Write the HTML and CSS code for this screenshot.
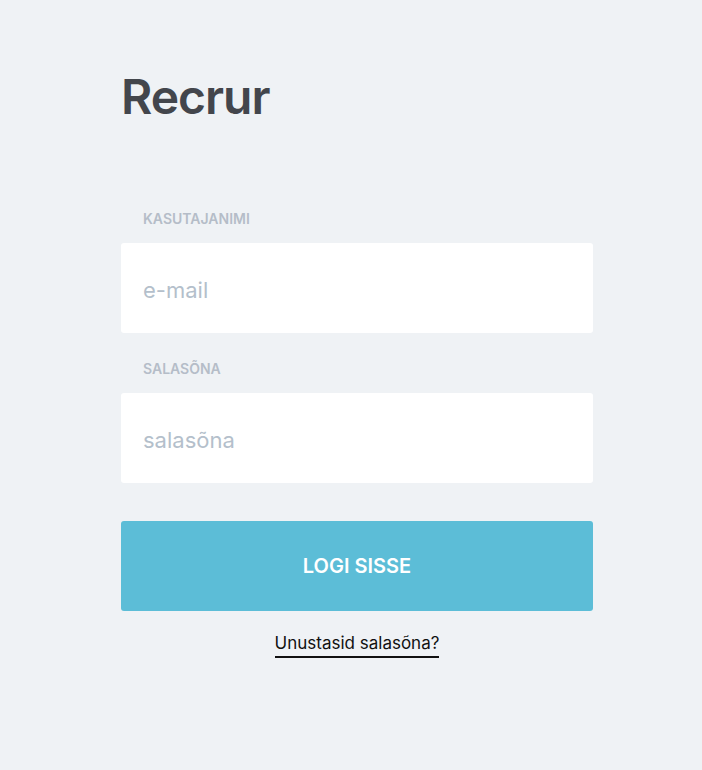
FILE: index.html
```html
<!DOCTYPE html>
<html lang="et">
<head>
    <meta charset="UTF-8">
    <meta name="viewport" content="width=device-width, initial-scale=1.0">
    <title>Recrur</title>
    <link rel="stylesheet" href="styles.css">
</head>
<body>
    <div class="login">
        <h1 class="logo">Recrur</h1>

        <form class="login-form">
            <label class="field-label" for="email">KASUTAJANIMI</label>
            <input class="field" id="email" type="text" placeholder="e-mail">

            <label class="field-label" for="password">SALASÕNA</label>
            <input class="field" id="password" type="password" placeholder="salasõna">

            <button class="btn-login" type="button">LOGI SISSE</button>
        </form>

        <div class="forgot">
            <a href="#">Unustasid salasõna?</a>
        </div>
    </div>
</body>
</html>
```

FILE: styles.css
```css
body {
    margin: 0;
    padding: 0;
    background: #eff2f5;
    font-family: Inter, 'Open Sans', sans-serif;
    min-height: 100vh;
}

.login {
    width: 472px;
    margin-left: 121px;
    padding-top: 68px;
}

.logo {
    margin: 0;
    font-size: 48px;
    line-height: 58px;
    font-weight: 600;
    color: #43464c;
    letter-spacing: -1px;
}

/* Form */
.login-form {
    display: flex;
    flex-direction: column;
    margin-top: 85px;
}

.field-label {
    font-size: 14px;
    font-weight: 600;
    color: #b5bdc8;
    padding-left: 22px;
    line-height: 16px;
    margin-bottom: 16px;
}

.field {
    height: 90px;
    box-sizing: border-box;
    border: none;
    border-radius: 3px;
    background: #fff;
    padding: 4px 22px 0;
    font-family: inherit;
    font-size: 22px;
    color: #43464c;
    margin-bottom: 28px;
    outline: none;
}

.field::placeholder {
    color: #b4bfcb;
}

.btn-login {
    height: 90px;
    border: none;
    border-radius: 3px;
    background: #5cbdd7;
    color: #fff;
    font-family: inherit;
    font-size: 20px;
    font-weight: 600;
    cursor: pointer;
    margin-top: 10px;
}

.forgot {
    text-align: center;
    margin-top: 22px;
}

.forgot a {
    color: #111;
    font-size: 17px;
    text-decoration: none;
    padding-bottom: 3px;
    border-bottom: 2px solid #111;
}
```
